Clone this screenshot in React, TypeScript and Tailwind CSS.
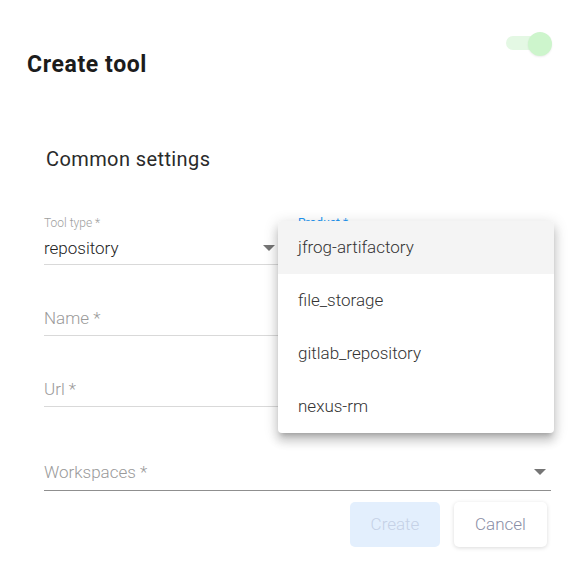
import React from "react";

function Arrow({ className }: { className?: string }) {
  return (
    <svg className={className} width="12" height="6" viewBox="0 0 12 6">
      <path d="M0 0 L12 0 L6 6 Z" fill="#757575" />
    </svg>
  );
}

export default function App() {
  const items = ["jfrog-artifactory", "file_storage", "gitlab_repository", "nexus-rm"];
  return (
    <div className="relative w-[579px] h-[566px] bg-white overflow-hidden font-['Roboto',sans-serif]">
      {/* header */}
      <div className="flex items-start justify-between pl-[27px] pr-[27px]">
        <h1 className="mt-[49px] text-[23px] leading-[32px] font-bold tracking-[0.6px] text-[#1c1c1c]">Create tool</h1>
        <div className="relative mt-[32px] w-[46px] h-[24px]">
          <div className="absolute left-0 top-[4px] w-[36px] h-[14px] rounded-full bg-[#e4f8e4]" />
          <div className="absolute right-0 top-0 w-[24px] h-[24px] rounded-full bg-[#cdf5cc] shadow-[0_1px_2px_rgba(0,0,0,0.08)]" />
        </div>
      </div>

      {/* body */}
      <div className="pl-[44px] pr-[28px]">
        <h2 className="mt-[64px] ml-[2px] text-[20px] leading-[28px] font-normal tracking-[0.4px] text-[#2a2a2a]">Common settings</h2>

        <div className="mt-[42px] flex gap-[18px]">
          <div className="w-[236px]">
            <div className="text-[12px] leading-[16px] text-[#9e9e9e] font-light">Tool type *</div>
            <div className="mt-[5px] flex items-center justify-between pb-[4px] border-b border-[#d9d9d9]">
              <span className="text-[17px] leading-[24px] font-light text-[#222]">repository</span>
              <Arrow className="mr-[5px]" />
            </div>
          </div>
          <div className="flex-1">
            <div className="text-[12px] leading-[16px] text-[#2196f3]">Product *</div>
            <div className="mt-[5px] h-[24px] pb-[4px] box-content border-b border-[#d9d9d9]" />
          </div>
        </div>

        <div className="mt-[41px] pb-[4px] border-b border-[#d9d9d9]">
          <span className="text-[17px] leading-[24px] font-light text-[#9a9a9a]">Name *</span>
        </div>

        <div className="mt-[41px] pb-[4px] border-b border-[#d9d9d9]">
          <span className="text-[17px] leading-[24px] font-light text-[#9a9a9a]">Url *</span>
        </div>

        <div className="mt-[53px] flex items-center justify-between pb-[6px] border-b border-[#8f8f8f]">
          <span className="text-[17px] leading-[24px] font-light text-[#9a9a9a]">Workspaces *</span>
          <Arrow className="mr-[5px]" />
        </div>

        <div className="mt-[11px] flex justify-end gap-[14px] pr-[4px]">
          <button className="w-[90px] h-[45px] rounded-[5px] bg-[#e3effd] text-[17px] font-light text-[#c5d1e6]">Create</button>
          <button className="w-[93px] h-[45px] rounded-[5px] bg-white text-[17px] font-light text-[#8a8ea6] shadow-[0_1px_4px_rgba(0,0,0,0.15)]">Cancel</button>
        </div>
      </div>

      {/* dropdown menu */}
      <div className="absolute left-[278px] top-[221px] w-[276px] rounded-[4px] bg-white overflow-hidden shadow-[0_5px_5px_-3px_rgba(0,0,0,0.2),0_8px_10px_1px_rgba(0,0,0,0.14),0_3px_14px_2px_rgba(0,0,0,0.12)]">
        {items.map((t, i) => (
          <div
            key={t}
            className={`h-[53px] flex items-center pl-[20px] text-[17px] font-light text-[#333] ${i === 0 ? "bg-[#f4f4f4]" : ""}`}
          >
            {t}
          </div>
        ))}
      </div>
    </div>
  );
}
